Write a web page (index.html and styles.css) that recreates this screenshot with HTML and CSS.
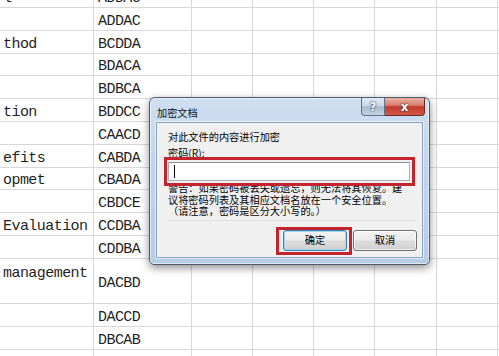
FILE: index.html
```html
<!DOCTYPE html>
<html lang="zh">
<head>
<meta charset="utf-8">
<title>加密文档</title>
<link rel="stylesheet" href="styles.css">
</head>
<body>
<div class="sheet">
  <div class="row"><div class="cell">l</div><div class="cell cb">ADDAC</div><div class="cell"></div><div class="cell"></div><div class="cell"></div><div class="cell"></div><div class="cell"></div><div class="cell"></div></div>
  <div class="row"><div class="cell"></div><div class="cell cb">ADDAC</div><div class="cell"></div><div class="cell"></div><div class="cell"></div><div class="cell"></div><div class="cell"></div><div class="cell"></div></div>
  <div class="row"><div class="cell">thod</div><div class="cell cb">BCDDA</div><div class="cell"></div><div class="cell"></div><div class="cell"></div><div class="cell"></div><div class="cell"></div><div class="cell"></div></div>
  <div class="row"><div class="cell"></div><div class="cell cb">BDACA</div><div class="cell"></div><div class="cell"></div><div class="cell"></div><div class="cell"></div><div class="cell"></div><div class="cell"></div></div>
  <div class="row"><div class="cell"></div><div class="cell cb">BDBCA</div><div class="cell"></div><div class="cell"></div><div class="cell"></div><div class="cell"></div><div class="cell"></div><div class="cell"></div></div>
  <div class="row"><div class="cell">tion</div><div class="cell cb">BDDCC</div><div class="cell"></div><div class="cell"></div><div class="cell"></div><div class="cell"></div><div class="cell"></div><div class="cell"></div></div>
  <div class="row"><div class="cell"></div><div class="cell cb">CAACD</div><div class="cell"></div><div class="cell"></div><div class="cell"></div><div class="cell"></div><div class="cell"></div><div class="cell"></div></div>
  <div class="row"><div class="cell">efits</div><div class="cell cb">CABDA</div><div class="cell"></div><div class="cell"></div><div class="cell"></div><div class="cell"></div><div class="cell"></div><div class="cell"></div></div>
  <div class="row"><div class="cell">opmet</div><div class="cell cb">CBADA</div><div class="cell"></div><div class="cell"></div><div class="cell"></div><div class="cell"></div><div class="cell"></div><div class="cell"></div></div>
  <div class="row"><div class="cell"></div><div class="cell cb">CBDCE</div><div class="cell"></div><div class="cell"></div><div class="cell"></div><div class="cell"></div><div class="cell"></div><div class="cell"></div></div>
  <div class="row"><div class="cell">Evaluation</div><div class="cell cb">CCDBA</div><div class="cell"></div><div class="cell"></div><div class="cell"></div><div class="cell"></div><div class="cell"></div><div class="cell"></div></div>
  <div class="row"><div class="cell"></div><div class="cell cb">CDDBA</div><div class="cell"></div><div class="cell"></div><div class="cell"></div><div class="cell"></div><div class="cell"></div><div class="cell"></div></div>
  <div class="row tall"><div class="cell top">management</div><div class="cell cb mid">DACBD</div><div class="cell"></div><div class="cell"></div><div class="cell"></div><div class="cell"></div><div class="cell"></div><div class="cell"></div></div>
  <div class="row"><div class="cell"></div><div class="cell cb">DACCD</div><div class="cell"></div><div class="cell"></div><div class="cell"></div><div class="cell"></div><div class="cell"></div><div class="cell"></div></div>
  <div class="row"><div class="cell"></div><div class="cell cb">DBCAB</div><div class="cell"></div><div class="cell"></div><div class="cell"></div><div class="cell"></div><div class="cell"></div><div class="cell"></div></div>
  <div class="row"><div class="cell"></div><div class="cell cb"></div><div class="cell"></div><div class="cell"></div><div class="cell"></div><div class="cell"></div><div class="cell"></div><div class="cell"></div></div>
</div>

<div class="dialog">
  <div class="titlebar">
    <div class="title">加密文档</div>
    <div class="controls">
      <div class="ctl help">?</div>
      <div class="ctl close">x</div>
    </div>
  </div>
  <div class="content">
    <div class="lead">对此文件的内容进行加密</div>
    <div class="label">密码(<u>R</u>):</div>
    <div class="input"><span class="caret"></span></div>
    <div class="warn">警告：如果密码被丢失或遗忘，则无法将其恢复。建<br>议将密码列表及其相应文档名放在一个安全位置。<br>（请注意，密码是区分大小写的。）</div>
    <div class="sep"></div>
    <div class="buttons">
      <div class="btn default">确定</div>
      <div class="btn">取消</div>
    </div>
  </div>
</div>

<div class="mark mark-input"></div>
<div class="mark mark-ok"></div>
</body>
</html>
```

FILE: styles.css
```css
html, body {
  margin: 0;
  padding: 0;
}
body {
  width: 499px;
  height: 356px;
  overflow: hidden;
  background: #ffffff;
  position: relative;
}

.sheet {
  margin-top: -14.8px;
}
.row {
  display: grid;
  grid-template-columns: 94px 98px 61px 61px 61px 62px 61px 1fr;
  height: 22.8px;
}
.row.tall {
  height: 45.6px;
}
.cell {
  box-sizing: border-box;
  border-right: 1px solid #d6d8da;
  border-bottom: 1px solid #d6d8da;
  font-family: "Liberation Mono", "DejaVu Sans Mono", monospace;
  font-size: 15px;
  letter-spacing: -0.55px;
  line-height: 17px;
  color: #1f1f1f;
  padding-left: 3px;
  padding-bottom: 0;
  display: flex;
  align-items: flex-end;
  white-space: nowrap;
  overflow: hidden;
}
.cell.cb {
  padding-left: 4px;
}
.cell.top {
  align-items: flex-start;
  padding-top: 6px;
}
.cell.mid {
  align-items: center;
  padding-top: 5px;
}

.dialog {
  position: absolute;
  left: 149px;
  top: 97px;
  width: 281px;
  height: 168px;
  box-sizing: border-box;
  border: 1px solid #4e5a68;
  border-radius: 6px 6px 5px 5px;
  background: linear-gradient(180deg, #cfdff1 0%, #c1d6ed 35%, #b6cde7 100%);
  box-shadow: 0 3px 9px rgba(0, 0, 0, 0.45), inset 0 0 0 1px rgba(255, 255, 255, 0.55);
  display: flex;
  flex-direction: column;
  font-family: "Noto Sans CJK SC", "Noto Sans", sans-serif;
  font-size: 10.2px;
  color: #000000;
}
.titlebar {
  height: 24px;
  display: flex;
  align-items: flex-start;
  flex-shrink: 0;
}
.title {
  padding: 9px 0 0 7px;
  line-height: 12px;
  color: #111111;
}
.controls {
  margin-left: auto;
  margin-right: 4px;
  display: flex;
}
.ctl {
  height: 18px;
  box-sizing: border-box;
  display: flex;
  align-items: center;
  justify-content: center;
  font-family: "DejaVu Sans", "Liberation Sans", sans-serif;
  font-weight: bold;
  color: #ffffff;
  text-shadow: 0 0 1px #223, 0 0 2px #334;
}
.help {
  width: 24px;
  border: 1px solid #5f7186;
  border-top: none;
  border-radius: 0 0 0 4px;
  background: linear-gradient(180deg, #e2ebf5 0%, #c9d7e6 45%, #a7bbd0 52%, #c3d3e4 100%);
  font-size: 12px;
}
.close {
  width: 40px;
  border: 1px solid #6a2a26;
  border-top: none;
  border-left: none;
  border-radius: 0 0 4px 0;
  background: linear-gradient(180deg, #eab0a4 0%, #d9806f 42%, #c23a2c 52%, #d25a47 100%);
  font-size: 12px;
}

.content {
  flex: 1;
  margin: 0 6px 6px 6px;
  border: 1px solid #8ba1b9;
  background: #f0f0f0;
  box-shadow: 0 0 0 1px rgba(255, 255, 255, 0.6);
  padding: 8px 5px 0 11px;
}
.lead {
  line-height: 12px;
}
.label {
  margin-top: 4px;
  line-height: 12px;
}
.input {
  margin-top: 3px;
  width: 242px;
  height: 19px;
  box-sizing: border-box;
  border: 1px solid #abadb3;
  border-top-color: #8e9198;
  background: #ffffff;
  display: flex;
  align-items: center;
}
.caret {
  display: block;
  width: 1px;
  height: 13px;
  margin-left: 5px;
  background: #000000;
}
.warn {
  margin-top: 1px;
  line-height: 11.6px;
  white-space: nowrap;
}
.sep {
  margin-top: 3px;
  height: 1px;
  background: #dcdfe3;
  margin-right: 1px;
}
.buttons {
  margin-top: 9px;
  display: flex;
  justify-content: flex-end;
  gap: 6px;
}
.btn {
  width: 64px;
  height: 21px;
  box-sizing: border-box;
  border: 1px solid #707070;
  border-radius: 3px;
  background: linear-gradient(180deg, #f4f4f4 0%, #ebebeb 48%, #dddddd 52%, #cfcfcf 100%);
  box-shadow: inset 0 0 0 1px rgba(255, 255, 255, 0.7);
  display: flex;
  align-items: center;
  justify-content: center;
  line-height: 12px;
}
.btn.default {
  border-color: #3c7fb1;
  box-shadow: inset 0 0 0 1px #9fd5f5;
}

.mark {
  position: absolute;
  box-sizing: border-box;
  border: 3px solid #c4242e;
}
.mark-input {
  left: 164px;
  top: 157px;
  width: 251px;
  height: 29px;
}
.mark-ok {
  left: 276px;
  top: 227px;
  width: 76px;
  height: 28px;
}
```
